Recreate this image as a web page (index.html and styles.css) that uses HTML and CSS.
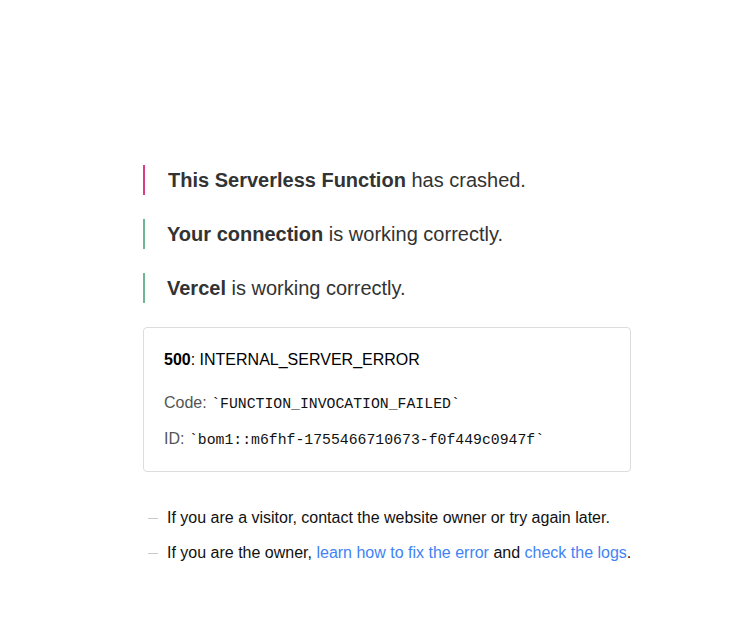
FILE: index.html
```html
<!DOCTYPE html>
<html lang="en">
<head>
<meta charset="utf-8">
<title>500: INTERNAL_SERVER_ERROR</title>
<link rel="stylesheet" href="styles.css">
</head>
<body>
<main class="main">
  <p class="status status-error"><strong>This Serverless Function</strong> has crashed.</p>
  <p class="status status-ok"><strong>Your connection</strong> is working correctly.</p>
  <p class="status status-ok"><strong>Vercel</strong> is working correctly.</p>

  <div class="devinfo">
    <div class="error-code"><strong>500</strong>: INTERNAL_SERVER_ERROR</div>
    <div class="devinfo-line line-code">Code: <code>`FUNCTION_INVOCATION_FAILED`</code></div>
    <div class="devinfo-line line-id">ID: <code>`bom1::m6fhf-1755466710673-f0f449c0947f`</code></div>
  </div>

  <ul class="help">
    <li class="help-item"><span class="dash"></span><span>If you are a visitor, contact the website owner or try again later.</span></li>
    <li class="help-item"><span class="dash"></span><span>If you are the owner, <a class="link" href="#">learn how to fix the error</a> and <a class="link" href="#">check the logs</a>.</span></li>
  </ul>
</main>
</body>
</html>
```

FILE: styles.css
```css
html, body {
  margin: 0;
  padding: 0;
  background: #fff;
}

body {
  font-family: "Liberation Sans", Arial, sans-serif;
  color: #333;
}

.main {
  width: 488px;
  margin: 0 0 0 143px;
  padding-top: 165px;
  display: flex;
  flex-direction: column;
}

.status {
  margin: 0 0 24px 0;
  height: 30px;
  line-height: 30px;
  font-size: 20px;
  padding-left: 22px;
  border-left: 2px solid #6db596;
  color: #333;
}

.status strong {
  font-weight: 700;
}

.status-error {
  border-left-color: #d93d85;
  padding-left: 23px;
}

.devinfo {
  border: 1px solid #dcdcdc;
  border-radius: 4px;
  padding: 20px 20px 19px 20px;
  display: flex;
  flex-direction: column;
}

.error-code {
  font-size: 16px;
  line-height: 24px;
  color: #000;
}

.devinfo-line {
  font-size: 16px;
  line-height: 24px;
  color: #555;
}

.line-code {
  margin-top: 19px;
}

.line-id {
  margin-top: 11px;
}

.devinfo-line code {
  font-family: "Liberation Mono", "DejaVu Sans Mono", monospace;
  font-size: 14.8px;
  color: #111;
}

.help {
  list-style: none;
  margin: 34px 0 0 0;
  padding: 0;
  display: flex;
  flex-direction: column;
  gap: 11px;
}

.help-item {
  font-size: 16px;
  line-height: 24px;
  color: #111;
  display: flex;
  align-items: center;
  white-space: nowrap;
}

.dash {
  display: inline-block;
  width: 10px;
  height: 1px;
  background: #c8c8c8;
  margin: 0 9px 0 5px;
  flex: none;
}

.link {
  color: #4183f4;
  text-decoration: none;
}
```
